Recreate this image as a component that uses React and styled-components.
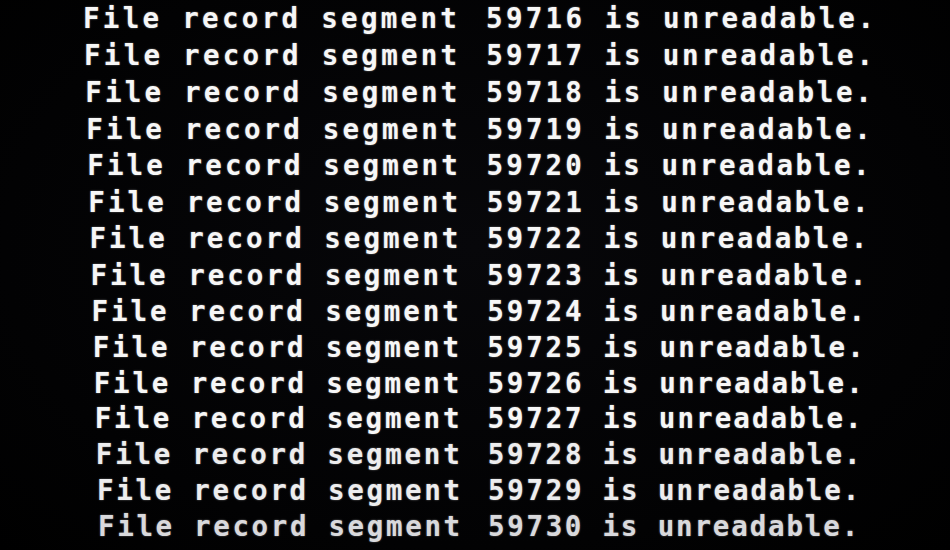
import React from 'react';
import styled, { createGlobalStyle } from 'styled-components';

const GlobalStyle = createGlobalStyle`
  html, body {
    margin: 0;
    padding: 0;
    background: #020203;
  }
`;

const Screen = styled.div`
  width: 950px;
  height: 550px;
  overflow: hidden;
  background: radial-gradient(ellipse at 50% 45%, #07070a 0%, #020203 70%, #000 100%);
  display: flex;
  flex-direction: column;
  box-sizing: border-box;
`;

const Line = styled.div`
  font-family: "DejaVu Sans Mono", "Liberation Mono", monospace;
  font-weight: bold;
  font-size: 27.5px;
  white-space: pre;
  color: ${({ $color }) => $color};
  text-shadow: 0 0 2px rgba(255, 255, 255, 0.45);
  height: ${({ $height }) => $height}px;
  line-height: ${({ $height }) => $height}px;
  padding-left: ${({ $left }) => $left}px;
  letter-spacing: ${({ $spacing }) => $spacing}px;
`;

const Num = styled.span`
  margin-left: 6px;
`;

const Tail = styled.span`
  letter-spacing: ${({ $spacing }) => $spacing}px;
`;

const FONT = 27.5;
const ADVANCE = 0.602 * FONT;

const rows = Array.from({ length: 15 }, (_, i) => {
  const t = i / 14;
  const pitch = 19.85 - 0.65 * t;
  return {
    id: 59716 + i,
    pitch,
    tailPitch: pitch - (0.4 + 0.4 * t),
    left: 83 + 15 * t,
    height: 37 - 1.4 * t,
    color: i === 14 ? '#d9d9dc' : i > 11 ? '#ededee' : '#f7f7f7',
  };
});

export default function App() {
  return (
    <>
      <GlobalStyle />
      <Screen>
        {rows.map((r) => (
          <Line
            key={r.id}
            $left={r.left}
            $spacing={r.pitch - ADVANCE}
            $height={r.height}
            $color={r.color}
          >
            {'File record segment '}
            <Num>{r.id}</Num>
            <Tail $spacing={r.tailPitch - ADVANCE}>{' is unreadable.'}</Tail>
          </Line>
        ))}
      </Screen>
    </>
  );
}
